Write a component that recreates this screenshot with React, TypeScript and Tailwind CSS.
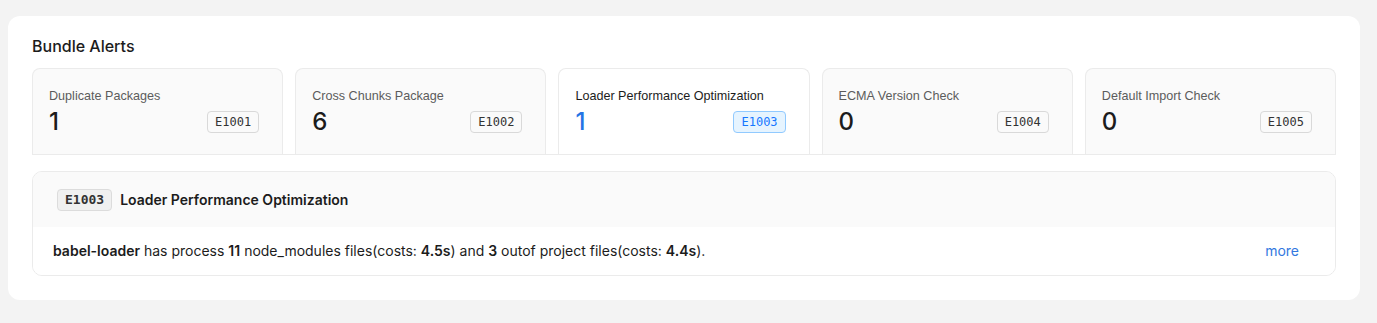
import { useState } from 'react'

type Rule = {
  code: string
  title: string
  count: number
}

const rules: Rule[] = [
  { code: 'E1001', title: 'Duplicate Packages', count: 1 },
  { code: 'E1002', title: 'Cross Chunks Package', count: 6 },
  { code: 'E1003', title: 'Loader Performance Optimization', count: 1 },
  { code: 'E1004', title: 'ECMA Version Check', count: 0 },
  { code: 'E1005', title: 'Default Import Check', count: 0 },
]

const mono = "font-['DejaVu_Sans_Mono','Liberation_Mono',monospace]"

export default function App() {
  const [active, setActive] = useState('E1003')
  const current = rules.find((rule) => rule.code === active) ?? rules[2]

  return (
    <div className="min-h-[323px] w-full bg-[#f3f3f3] pl-2 pr-[17px] pt-4 font-['Inter','Noto_Sans',sans-serif] text-[#1c1c1c]">
      <div className="rounded-xl bg-white px-6 pb-6 pt-5">
        <h2 className="mb-3 text-base leading-5 font-medium text-[#1c1c1c]">Bundle Alerts</h2>

        <div className="grid grid-cols-5 gap-3 border-b border-[#ebebeb]">
          {rules.map((rule) => {
            const isActive = rule.code === active
            return (
              <button
                key={rule.code}
                type="button"
                onClick={() => setActive(rule.code)}
                className={`min-w-0 rounded-t-lg border border-b-0 border-[#ebebeb] px-4 pb-4 pt-[17px] text-left ${
                  isActive ? 'bg-white' : 'bg-[#fafafa]'
                }`}
              >
                <div
                  className={`font-['Liberation_Sans','Arial',sans-serif] text-[12.6px] leading-5 ${
                    isActive ? 'text-[#1c1c1c]' : 'text-[#5c5c5c]'
                  }`}
                >
                  {rule.title}
                </div>
                <div className="flex items-center justify-between pr-[7px]">
                  <span className={`text-2xl leading-8 font-medium ${isActive ? 'text-[#2474e5]' : 'text-[#1c1c1c]'}`}>
                    {rule.count}
                  </span>
                  <span
                    className={`${mono} rounded-sm border px-[7px] text-xs leading-5 ${
                      isActive
                        ? 'border-[#91caff] bg-[#e6f4ff] text-[#1677ff]'
                        : 'border-[#d9d9d9] bg-[#fafafa] text-[#333]'
                    }`}
                  >
                    {rule.code}
                  </span>
                </div>
              </button>
            )
          })}
        </div>

        <div className="mt-4 overflow-hidden rounded-[10px] border border-[#ebebeb]">
          <div className="flex h-[55px] items-center gap-2 bg-[#fafafa] px-6">
            <span className={`${mono} rounded-sm border border-[#dcdcdc] bg-[#f0f0f0] px-[7px] text-[13px] leading-5 font-bold text-[#333]`}>
              {current.code}
            </span>
            <span className="text-sm font-semibold text-[#1c1c1c]">{current.title}</span>
          </div>
          <div className="flex h-12 items-center justify-between bg-white pl-5 pr-9 text-sm text-[#1c1c1c]">
            <p>
              <b className="font-semibold">babel-loader</b> has process <b className="font-semibold">11</b>{' '}
              node_modules files(costs: <b className="font-semibold">4.5s</b>) and{' '}
              <b className="font-semibold">3</b> outof project files(costs: <b className="font-semibold">4.4s</b>).
            </p>
            <a href="#" className="text-[#3378e0]">
              more
            </a>
          </div>
        </div>
      </div>
    </div>
  )
}
